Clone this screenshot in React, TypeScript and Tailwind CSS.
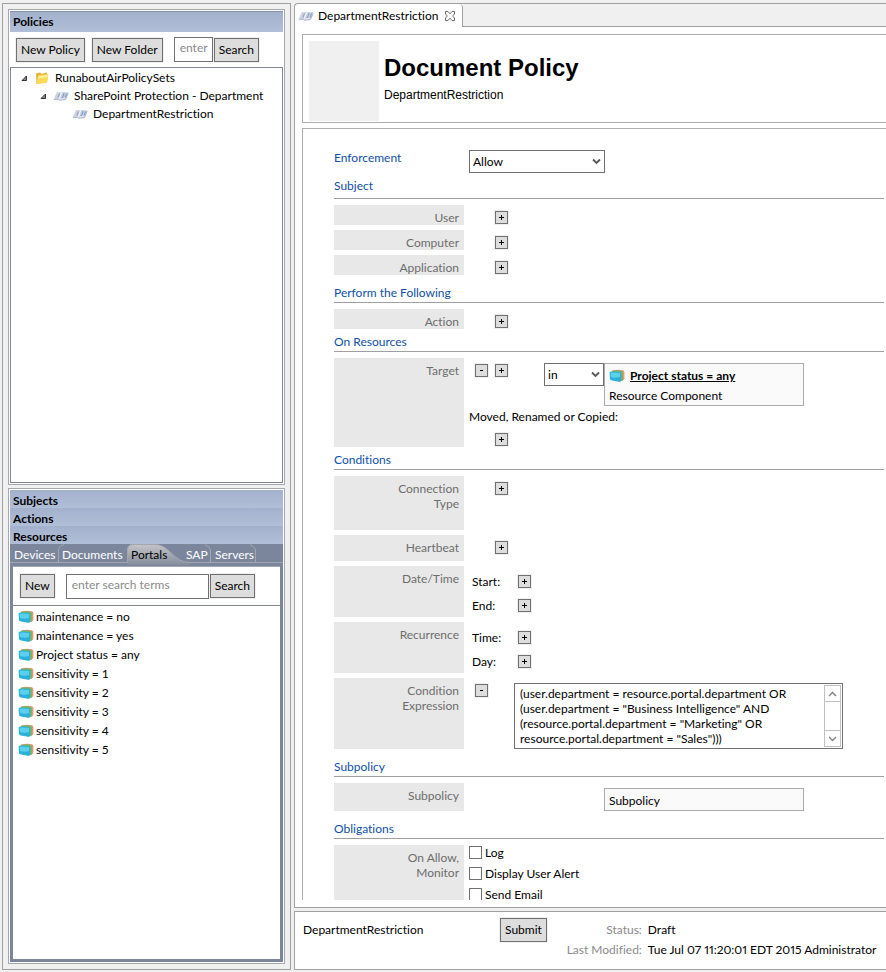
import React, { useState } from 'react';

const resources = [
  'maintenance = no',
  'maintenance = yes',
  'Project status = any',
  'sensitivity = 1',
  'sensitivity = 2',
  'sensitivity = 3',
  'sensitivity = 4',
  'sensitivity = 5',
];

const expression = `(user.department = resource.portal.department OR
(user.department = "Business Intelligence" AND
(resource.portal.department = "Marketing" OR
resource.portal.department = "Sales")))`;

/* Icons */

function PolicyIcon() {
  return (
    <svg width="16" height="12" viewBox="0 0 16 12" className="shrink-0">
      <path d="M4 2 H15.2 L13 8.6 L7 9.6 L0.8 8.8 Z" fill="#dbe1ec" />
      <path d="M4 2.5 H8.5 L6.2 8.4 H1.2 Z" fill="#cdd2dc" />
      <path d="M9 2.5 H14.8 L12.8 8 H7 Z" fill="#c3cfe4" />
      <path d="M0.8 9.3 H5.5 L6.8 10.2 L12.4 9.6 L15.2 3.2" fill="none" stroke="#a3aec6" />
      <path d="M6.5 3.5 L5 7.5 M10 3.8 H11.5 M10.8 4 L9.6 7.5 H8.6 M13.6 3.5 L12.2 7.2" fill="none" stroke="#8799c2" />
      <path d="M8.5 2.5 L6.5 8.5" stroke="#f7f9fc" />
    </svg>
  );
}

function FolderIcon() {
  return (
    <svg width="14" height="14" viewBox="0 0 14 14" className="shrink-0">
      <path d="M1 2.5 L5 1.5 L6.5 2.8 L12 1.6 L12.8 5 L12 11.5 L1.5 13 Z" fill="#e8b53a" />
      <path d="M3 4.5 L13.5 3 L12 11.5 L1.5 13 Z" fill="#fcd956" />
      <path d="M3.5 5 L13 3.8 L12.5 6 L3 7.5 Z" fill="#feee9c" />
    </svg>
  );
}

function ResourceIcon() {
  return (
    <svg width="16" height="14" viewBox="0 0 16 14" className="shrink-0">
      <path d="M3 1.6 Q8 0 14 1.2 L15.4 2.4 V10 L14 11.6 H10 Z" fill="#e79573" />
      <path d="M2.5 2 Q8 0.8 12.6 1.8 L13.8 3 V11.4 L10 12.8 Z" fill="#73b566" />
      <path d="M0.6 3.4 Q1 2.6 3 2.5 L10.8 3 Q12 3.2 12 4.4 V11.8 Q11.6 13 10 12.8 L3 11.6 Q1.2 11 1 10 Z" fill="#2bb0dc" />
      <path d="M1.6 4 L3.4 3.4 L11 4 V8 Q6 9.6 2 8 Z" fill="#5ad0ee" />
    </svg>
  );
}

function TreeArrow() {
  return (
    <svg width="7" height="7" viewBox="0 0 7 7" className="shrink-0">
      <path d="M5.5 1 V5.5 H1 Z" fill="#8a8a8a" stroke="#333" />
    </svg>
  );
}

function CloseIcon() {
  return (
    <svg width="12" height="12" viewBox="0 0 12 12">
      <path
        d="M1.5 1.5 H4 L6 3.7 L8 1.5 H10.5 V4 L8.6 6 L10.5 8 V10.5 H8 L6 8.3 L4 10.5 H1.5 V8 L3.4 6 L1.5 4 Z"
        fill="#fff"
        stroke="#6b6b6b"
      />
    </svg>
  );
}

/* Small controls */

function Button({ children }: { children: React.ReactNode }) {
  return (
    <button className="h-6 shrink-0 border border-[#707070] bg-[#dddddd] px-1 whitespace-nowrap outline outline-[#f0f0f0]">
      {children}
    </button>
  );
}

function SquareButton({ sign, label }: { sign: '+' | '-'; label: string }) {
  return (
    <button
      aria-label={label}
      className="flex size-[13px] shrink-0 items-center justify-center border border-[#707070] bg-[#dddddd] outline outline-[#f0f0f0]"
    >
      <svg width="7" height="7" viewBox="0 0 7 7">
        <path d={sign === '+' ? 'M1 3.5 H6 M3.5 1 V6' : 'M2 3.5 H5'} stroke="#000" />
      </svg>
    </button>
  );
}

function Select({ label, options, id }: { label: string; options: string[]; id: string }) {
  return (
    <div className="relative h-full w-full">
      <select
        id={id}
        aria-label={label}
        className="h-full w-full appearance-none border border-[#707070] bg-white pl-[3px] text-black"
      >
        {options.map((option) => (
          <option key={option}>{option}</option>
        ))}
      </select>
      <svg width="9" height="7" viewBox="0 0 9 7" className="pointer-events-none absolute top-2 right-1">
        <path d="M1 1.5 L4.5 5 L8 1.5" fill="none" stroke="#555" strokeWidth="1.8" />
      </svg>
    </div>
  );
}

/* Form building blocks */

const headingSpace = {
  first: 'pt-px pb-[3px]',
  tight: 'pt-1',
  normal: 'pt-[9px]',
};

type SectionProps = {
  title: string;
  space?: keyof typeof headingSpace;
  children: React.ReactNode;
};

function Section({ title, space = 'normal', children }: SectionProps) {
  return (
    <section>
      <h2 className={`border-b border-[#a0a0a0] leading-[18px] text-[#0f4fa8] ${headingSpace[space]}`}>{title}</h2>
      <div className="flex flex-col gap-[5px] pt-1.5">{children}</div>
    </section>
  );
}

function Row({ label, height, children }: { label: React.ReactNode; height: string; children?: React.ReactNode }) {
  return (
    <div className={`flex ${height}`}>
      <div className="w-[130px] shrink-0 bg-[#e8e8e8] pt-[5px] pr-[5px] text-right leading-[15px] text-[#6d6d6d]">
        {label}
      </div>
      <div className="min-w-0 flex-1 pl-[5px]">{children}</div>
    </div>
  );
}

function AddOnly({ label }: { label: string }) {
  return (
    <div className="pt-1.5 pl-[26px]">
      <SquareButton sign="+" label={label} />
    </div>
  );
}

function AddLine({ label }: { label: string }) {
  return (
    <div className="flex h-6 items-center pl-[3px]">
      <span className="w-[46px] pt-0.5">{label}:</span>
      <SquareButton sign="+" label={`Add ${label}`} />
    </div>
  );
}

function Check({ label }: { label: string }) {
  return (
    <label className="flex h-[21px] items-start gap-[3px] leading-4">
      <input type="checkbox" className="mt-px size-[13px] appearance-none border border-[#707070] bg-white checked:bg-[#707070]" />
      {label}
    </label>
  );
}

/* Left side */

function PolicyTree() {
  return (
    <div className="flex min-h-0 flex-1 flex-col border border-[#a5a8b2] bg-white p-px">
      <h2 className="h-[21px] border-t border-[#8592ad] bg-linear-to-b from-[#a3b1cd] to-[#b1bed7] pl-[3px] leading-5 font-bold">
        Policies
      </h2>
      <div className="flex h-[35px] items-center pl-1.5">
        <Button>New Policy</Button>
        <span className="w-[7px]" />
        <Button>New Folder</Button>
        <input
          aria-label="Search policies"
          placeholder="enter"
          className="mr-px ml-[11px] h-[25px] w-[39px] border border-[#707070] pb-1 pl-[5px] placeholder:text-[#8a8a8a]"
        />
        <Button>Search</Button>
      </div>
      <ul className="flex-1 border border-[#828790] pt-px leading-[18px]">
        <li className="flex items-center pl-2.5">
          <TreeArrow />
          <span className="w-[7px]" />
          <FolderIcon />
          <span className="pl-1.5">RunaboutAirPolicySets</span>
        </li>
        <li className="flex items-center pl-[29px]">
          <TreeArrow />
          <span className="w-1.5" />
          <PolicyIcon />
          <span className="pl-[5px] whitespace-nowrap">SharePoint Protection - Department</span>
        </li>
        <li className="flex items-center pl-[61px]">
          <PolicyIcon />
          <span className="pl-[5px]">DepartmentRestriction</span>
        </li>
      </ul>
    </div>
  );
}

function ComponentTabs() {
  return (
    <div role="tablist" className="relative flex h-[22px] bg-[#7b869c] leading-5 text-white">
      {/* tab outlines and the raised Portals tab */}
      <svg width="273" height="22" viewBox="0 0 273 22" className="absolute top-0 left-0">
        <defs>
          <linearGradient id="raised" x1="0" y1="0" x2="0" y2="1">
            <stop offset="0" stopColor="#c4c5c8" />
            <stop offset="1" stopColor="#858d9d" />
          </linearGradient>
        </defs>
        <path
          d="M117.5 21 V5 Q118 0.5 123 0.5 H145 C160 0.5 163 18.5 180 18.5 V21 Z"
          fill="url(#raised)"
        />
        <path
          d="M0 18.5 H117.5 V5 Q118 0.5 123 0.5 H145 C160 0.5 163 18.5 180 18.5 H273 M48.5 18 V6 Q49 2 54 0.5 M195 0.5 Q200 3 200.5 6 V18 M240 0.5 Q245 3 245.5 6 V18"
          fill="none"
          stroke="#a2a6ae"
        />
      </svg>
      <button role="tab" className="relative w-12 pl-1 text-left">Devices</button>
      <button role="tab" className="relative w-[69px] pl-1 text-left">Documents</button>
      <button role="tab" aria-selected="true" className="relative w-[54px] pl-1 text-left text-black">Portals</button>
      <button role="tab" className="relative w-[30px] pl-[5px] text-left">SAP</button>
      <button role="tab" className="relative w-12 pl-1 text-left">Servers</button>
    </div>
  );
}

function ComponentPanel() {
  return (
    <div className="flex min-h-0 flex-1 flex-col border border-[#a5a8b2] bg-white p-px">
      {['Subjects', 'Actions', 'Resources'].map((name) => (
        <button
          key={name}
          className="h-[18px] shrink-0 bg-linear-to-b from-[#a3b1cd] to-[#b1bed7] pt-0.5 pl-[3px] text-left leading-[18px] font-bold"
        >
          {name}
        </button>
      ))}
      <ComponentTabs />
      <div className="flex flex-1 flex-col border-x-[3px] border-b-[3px] border-[#7b869c] bg-white">
        <div className="flex h-10 items-center border-t border-b border-t-[#a5a8b2] border-b-[#828790] pl-[7px]">
          <Button>New</Button>
          <input
            aria-label="Search components"
            placeholder="enter search terms"
            className="mr-px ml-[11px] h-[25px] w-[143px] border border-[#707070] pb-1 pl-[5px] placeholder:text-[#8a8a8a]"
          />
          <Button>Search</Button>
        </div>
        <ul className="pt-px leading-[19px]">
          {resources.map((name) => (
            <li key={name} className="flex items-center gap-0.5 pl-[5px]">
              <ResourceIcon />
              {name}
            </li>
          ))}
        </ul>
      </div>
    </div>
  );
}

/* Editor */

function PolicyForm() {
  const [text, setText] = useState(expression);
  return (
    <form className="pt-[21px] pr-0.5 pl-[31px]" onSubmit={(e) => e.preventDefault()}>
      <div className="flex pb-[3px]">
        <label htmlFor="enforcement" className="w-[135px] leading-4 text-[#0f4fa8]">
          Enforcement
        </label>
        <div className="h-[23px] w-[136px]">
          <Select id="enforcement" label="Enforcement" options={['Allow', 'Deny', 'Monitor']} />
        </div>
      </div>

      <Section title="Subject" space="first">
        <Row label="User" height="min-h-5"><AddOnly label="Add user" /></Row>
        <Row label="Computer" height="min-h-5"><AddOnly label="Add computer" /></Row>
        <Row label="Application" height="min-h-5"><AddOnly label="Add application" /></Row>
      </Section>

      <Section title="Perform the Following">
        <Row label="Action" height="min-h-5"><AddOnly label="Add action" /></Row>
      </Section>

      <Section title="On Resources" space="tight">
        <Row label="Target" height="min-h-[89px]">
          <div className="flex items-start pt-[5px] pl-1.5">
            <div className="flex w-[69px] gap-[7px] pt-px">
              <SquareButton sign="-" label="Remove target" />
              <SquareButton sign="+" label="Add target" />
            </div>
            <div className="h-[23px] w-[60px]">
              <Select id="target-operator" label="Target operator" options={['in', 'not in']} />
            </div>
            <div className="w-[200px] border border-[#acacac] bg-[#fafafa] pt-[3px] pl-1 leading-[18px]">
              <a href="#component" className="flex items-center gap-[5px] font-bold">
                <ResourceIcon />
                <span className="underline">Project status = any</span>
              </a>
              <p className="pt-0.5">Resource Component</p>
            </div>
          </div>
          <p className="pt-0.5 pb-px leading-[18px]">Moved, Renamed or Copied:</p>
          <AddOnly label="Add moved resource" />
        </Row>
      </Section>

      <Section title="Conditions" space="tight">
        <Row label={<>Connection<br />Type</>} height="min-h-[54px]"><AddOnly label="Add connection type" /></Row>
        <Row label="Heartbeat" height="min-h-[26px]"><AddOnly label="Add heartbeat" /></Row>
        <Row label="Date/Time" height="min-h-[51px]">
          <div className="pt-[3px]">
            <AddLine label="Start" />
            <AddLine label="End" />
          </div>
        </Row>
        <Row label="Recurrence" height="min-h-[51px]">
          <div className="pt-[3px]">
            <AddLine label="Time" />
            <AddLine label="Day" />
          </div>
        </Row>
        <Row label={<>Condition<br />Expression</>} height="min-h-[71px]">
          <div className="flex items-start pt-[5px] pl-1.5">
            <div className="w-[39px] pt-px">
              <SquareButton sign="-" label="Remove condition expression" />
            </div>
            <div className="flex h-[66px] w-[329px] border border-[#707070] p-px">
              <textarea
                aria-label="Condition expression"
                value={text}
                onChange={(e) => setText(e.target.value)}
                className="min-w-0 flex-1 resize-none overflow-hidden pt-px pl-1 leading-[15px] whitespace-pre outline-none"
              />
              <div className="flex w-[17px] flex-col justify-between border border-[#c0c0c0]">
                <button aria-label="Scroll up" className="flex h-4 items-center justify-center border-b border-[#c0c0c0]">
                  <svg width="9" height="6" viewBox="0 0 9 6">
                    <path d="M1 5 L4.5 1.5 L8 5" fill="none" stroke="#808080" strokeWidth="1.3" />
                  </svg>
                </button>
                <button aria-label="Scroll down" className="flex h-4 items-center justify-center border-t border-[#c0c0c0]">
                  <svg width="9" height="6" viewBox="0 0 9 6">
                    <path d="M1 1 L4.5 4.5 L8 1" fill="none" stroke="#808080" strokeWidth="1.3" />
                  </svg>
                </button>
              </div>
            </div>
          </div>
        </Row>
      </Section>

      <Section title="Subpolicy">
        <Row label="Subpolicy" height="min-h-7">
          <div className="pt-[5px] pl-[135px]">
            <div className="h-[23px] w-[200px] border border-[#acacac] bg-[#fafafa] pl-1 leading-[23px]">Subpolicy</div>
          </div>
        </Row>
      </Section>

      <Section title="Obligations">
        <Row label={<>On Allow,<br />Monitor</>} height="min-h-[75px]">
          <Check label="Log" />
          <Check label="Display User Alert" />
          <Check label="Send Email" />
        </Row>
      </Section>
    </form>
  );
}

function Editor() {
  return (
    <main className="flex min-h-0 flex-1 flex-col rounded-tl border-t border-b border-l border-[#a0a0a0] bg-white">
      <div className="flex h-[23px] shrink-0">
        <div className="flex shrink-0 items-center rounded-tr border-r border-[#a0a0a0] pr-1.5 pl-[3px]">
          <PolicyIcon />
          <span className="w-[130px] pl-1">DepartmentRestriction</span>
          <button aria-label="Close tab">
            <CloseIcon />
          </button>
        </div>
        <div className="flex-1 border-b border-[#a0a0a0] bg-[#f0f0f0]" />
      </div>

      <header className="mt-[7px] ml-[7px] flex h-[89px] shrink-0 border-t border-b border-l border-[#acacb2] pt-1.5 pl-1.5 font-['Liberation_Sans',Arial,sans-serif]">
        <div className="h-20 w-[70px] bg-[#f0f0f0]" />
        <div className="pt-3 pl-[5px]">
          <h1 className="text-2xl leading-[30px] font-bold">Document Policy</h1>
          <p className="pt-[3px] leading-[18px]">DepartmentRestriction</p>
        </div>
      </header>

      <div className="mt-[5px] mb-[7px] ml-[7px] min-h-0 flex-1 overflow-hidden border-t border-l border-[#acacb2]">
        <PolicyForm />
      </div>
    </main>
  );
}

function StatusBar() {
  return (
    <footer className="flex h-[59px] shrink-0 items-start border-t border-b border-l border-[#a0a0a0] bg-white pt-1.5 pl-2 leading-5">
      <span className="w-[197px] shrink-0 pt-0.5">DepartmentRestriction</span>
      <Button>Submit</Button>
      <dl className="grid flex-1 grid-cols-[95px_1fr] gap-x-1.5 pt-0.5 whitespace-nowrap">
        <dt className="text-right text-[#8a8a8a]">Status:</dt>
        <dd>Draft</dd>
        <dt className="flex justify-end text-[#8a8a8a]">Last Modified:</dt>
        <dd className="proportional-nums">Tue Jul 07 11:20:01 EDT 2015 Administrator</dd>
      </dl>
    </footer>
  );
}

export default function App() {
  return (
    <div className="flex h-screen gap-[3px] overflow-hidden bg-[#f0f0f0] pt-[3px] pb-0.5 pl-0.5 font-['Lato','Segoe_UI',sans-serif] text-[12px] text-black [font-variant-ligatures:none]">
      <aside className="flex w-[289px] shrink-0 flex-col gap-[3px] border border-[#a0a0a0] p-[5px]">
        <PolicyTree />
        <ComponentPanel />
      </aside>
      <div className="flex min-w-0 flex-1 flex-col gap-[3px]">
        <Editor />
        <StatusBar />
      </div>
    </div>
  );
}
